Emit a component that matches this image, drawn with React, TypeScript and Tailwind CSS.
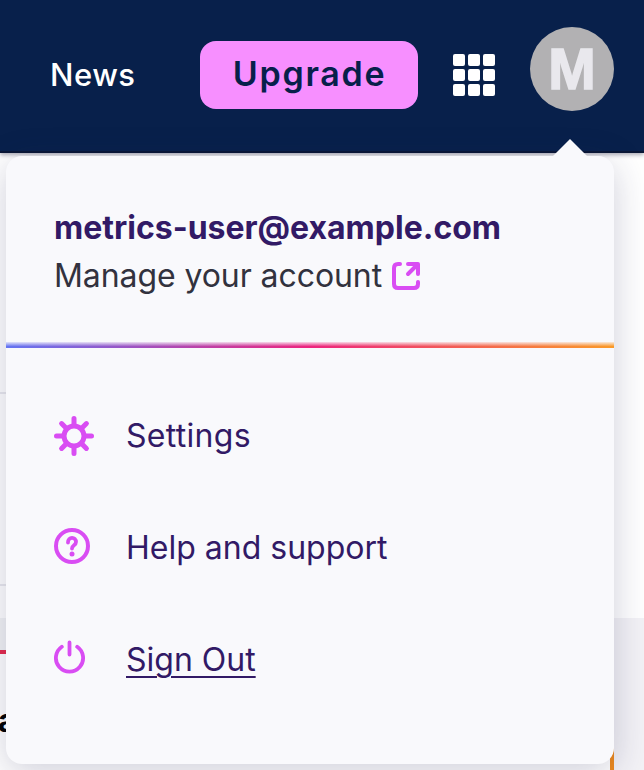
import React from "react";

function Header() {
  return (
    <header className="relative h-[153px] bg-[#08204b] flex items-start border-b-2 border-[#0a1736] shadow-[0_2px_4px_rgba(20,20,50,0.35)]">
      <a className="mt-[55px] ml-[50px] w-[150px] whitespace-nowrap font-['Inter'] text-[31px] font-medium leading-[40px] tracking-[0.5px] text-white">News</a>
      <button className="mt-[41px] h-[68px] w-[218px] shrink-0 rounded-[16px] bg-[#f78fff] pb-[2px] pl-[1px] font-['Inter'] text-[34px] font-semibold leading-[66px] tracking-[1.7px] text-[#08204b]">Upgrade</button>
      <div className="mt-[54px] ml-[35px] grid grid-cols-3 gap-[3px]">
        {Array.from({ length: 9 }, (_, i) => (
          <span key={i} className="size-[12px] rounded-[2px] bg-white" />
        ))}
      </div>
      <div className="mt-[27px] ml-[35px] flex size-[84px] items-center justify-center rounded-full bg-[#b2b1b3] font-['Liberation_Sans'] text-[57px] font-bold leading-none text-[#e9e8ed] [-webkit-text-stroke:1.5px_#e9e8ed]">M</div>
    </header>
  );
}

function PageBehind() {
  return (
    <main className="h-[617px] overflow-hidden bg-white">
      <div className="h-[239px]" />
      <div className="h-[2px] w-[300px] bg-[#e9e9ee]" />
      <div className="h-[190px]" />
      <div className="h-[2px] w-[300px] bg-[#e9e9ee]" />
      <div className="h-[32px]" />
      <div className="flex h-[152px]">
        <section className="w-[610px]">
          <div className="h-[32px] bg-[#f2f3f5]" />
          <div className="h-[4px] bg-[#e62a4c]" />
          <div className="-ml-[2px] mt-[47px] font-['Inter'] text-[32px] font-bold leading-[40px] text-black">a</div>
        </section>
        <div className="w-[4px] bg-[#ee8a1d]" />
        <div className="grow bg-[#f3f2f6]" />
      </div>
    </main>
  );
}

const iconProps = { fill: "none", stroke: "#d94df3", strokeLinecap: "round" as const };

function AccountMenu() {
  return (
    <div className="absolute left-[6px] top-[156px] h-[608px] w-[608px] rounded-[16px] bg-[#f9f9fc] pt-[48px] font-['Inter'] text-[32px] leading-[48px] text-[#321a66] shadow-[0_8px_36px_rgba(30,30,80,0.22)]">
      <svg className="absolute left-[546px] -top-[17px]" width="36" height="18" viewBox="0 0 36 18">
        <path d="M18 0 36 18H0Z" fill="#f9f9fc" />
      </svg>
      <div className="h-[48px] whitespace-nowrap pl-[48px] font-bold">metrics-user@example.com</div>
      <div className="flex h-[48px] items-center whitespace-nowrap pl-[48px] text-[#32323e]">
        <span className="w-[338px] tracking-[-0.08px]">Manage your account</span>
        <svg width="28" height="28" viewBox="0 0 28 28" {...iconProps} strokeWidth="4" strokeLinejoin="round">
          <path d="M8 2H6Q2 2 2 6V22Q2 26 6 26H22Q26 26 26 22V20M16 2H26V12M25 3 16 12" />
        </svg>
      </div>
      <div className="mt-[42px] h-[6px] bg-[linear-gradient(to_bottom,rgba(249,249,252,.85),rgba(249,249,252,0)_75%),linear-gradient(to_right,#6475f2,#ec257f_50%,#fa9a28)]" />
      <nav className="mt-[32px]">
        <div className="flex h-[112px] items-center pl-[48px]">
          <svg className="mr-[32px]" width="40" height="40" viewBox="0 0 40 40" {...iconProps} strokeWidth="5">
            <circle cx="20" cy="20" r="10" />
            <path d="M20 2.5V9M20 31v6.5M2.5 20H9M31 20h6.5M7.6 7.6l4.7 4.7M27.7 27.7l4.7 4.7M32.4 7.6l-4.7 4.7M12.3 27.7l-4.7 4.7" />
          </svg>
          <span className="tracking-[0.3px]">Settings</span>
        </div>
        <div className="flex h-[112px] items-center pl-[48px]">
          <svg className="mr-[36px] mb-[4px]" width="36" height="36" viewBox="0 0 36 36" {...iconProps} strokeWidth="4">
            <circle cx="18" cy="18" r="16" />
            <path d="M14 14.5C14 8.3 22 8.3 22 14C22 17.5 18 17 18 20.5" strokeWidth="3.8" />
            <circle cx="18" cy="26" r="2.5" fill="#d94df3" stroke="none" />
          </svg>
          <span>Help and support</span>
        </div>
        <div className="flex h-[112px] items-center pl-[48px]">
          <svg className="mr-[40px] mb-[7px]" width="32" height="34" viewBox="0 0 32 34" {...iconProps} strokeWidth="3.8">
            <path d="M15.5 2.5V14.5M7.8 6.8A13.6 13.6 0 1 0 23.2 6.8" />
          </svg>
          <span className="underline decoration-2 underline-offset-[5px]">Sign Out</span>
        </div>
      </nav>
    </div>
  );
}

export default function App() {
  return (
    <div className="relative h-[770px] w-[644px] overflow-hidden">
      <Header />
      <PageBehind />
      <AccountMenu />
    </div>
  );
}
